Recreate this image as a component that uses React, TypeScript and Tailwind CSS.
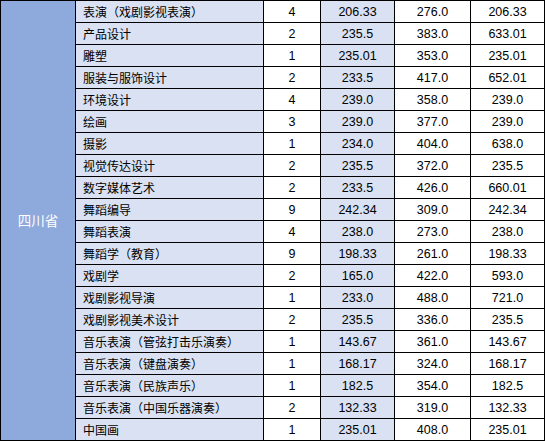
const rows: [string, string, string, string, string][] = [
  ["表演（戏剧影视表演）", "4", "206.33", "276.0", "206.33"],
  ["产品设计", "2", "235.5", "383.0", "633.01"],
  ["雕塑", "1", "235.01", "353.0", "235.01"],
  ["服装与服饰设计", "2", "233.5", "417.0", "652.01"],
  ["环境设计", "4", "239.0", "358.0", "239.0"],
  ["绘画", "3", "239.0", "377.0", "239.0"],
  ["摄影", "1", "234.0", "404.0", "638.0"],
  ["视觉传达设计", "2", "235.5", "372.0", "235.5"],
  ["数字媒体艺术", "2", "233.5", "426.0", "660.01"],
  ["舞蹈编导", "9", "242.34", "309.0", "242.34"],
  ["舞蹈表演", "4", "238.0", "273.0", "238.0"],
  ["舞蹈学（教育）", "9", "198.33", "261.0", "198.33"],
  ["戏剧学", "2", "165.0", "422.0", "593.0"],
  ["戏剧影视导演", "1", "233.0", "488.0", "721.0"],
  ["戏剧影视美术设计", "2", "235.5", "336.0", "235.5"],
  ["音乐表演（管弦打击乐演奏）", "1", "143.67", "361.0", "143.67"],
  ["音乐表演（键盘演奏）", "1", "168.17", "324.0", "168.17"],
  ["音乐表演（民族声乐）", "1", "182.5", "354.0", "182.5"],
  ["音乐表演（中国乐器演奏）", "2", "132.33", "319.0", "132.33"],
  ["中国画", "1", "235.01", "408.0", "235.01"],
];

const cjk = "font-['Noto_Sans_CJK_SC',sans-serif]";
const num = "font-['Liberation_Sans',sans-serif]";

export default function App() {
  return (
    <div className="w-[545px] h-[442px] bg-white">
      <div className="grid grid-cols-[74px_187px_56px_73px_75px_73px] grid-rows-[repeat(20,21px)] gap-px p-px bg-black w-[545px] text-black">
        <div
          className={`row-span-20 bg-[#8ea9db] flex items-center justify-center text-white text-[13.5px] ${cjk}`}
        >
          四川省
        </div>
        {rows.map(([name, count, a, b, c]) => (
          <Row key={name} name={name} count={count} a={a} b={b} c={c} />
        ))}
      </div>
    </div>
  );
}

function Row({
  name,
  count,
  a,
  b,
  c,
}: {
  name: string;
  count: string;
  a: string;
  b: string;
  c: string;
}) {
  return (
    <>
      <div
        className={`bg-[#d9e1f2] flex items-end pl-[7px] pb-[1px] text-[12px] leading-[18px] whitespace-nowrap ${cjk}`}
      >
        {name}
      </div>
      <div className={`bg-white flex items-end justify-center pb-[1px] text-[12.5px] leading-[18px] ${num}`}>
        {count}
      </div>
      <div className={`bg-[#d9e1f2] flex items-end justify-center pb-[1px] text-[12.5px] leading-[18px] ${num}`}>
        {a}
      </div>
      <div className={`bg-white flex items-end justify-center pb-[1px] text-[12.5px] leading-[18px] ${num}`}>
        {b}
      </div>
      <div className={`bg-white flex items-end justify-center pb-[1px] text-[12.5px] leading-[18px] ${num}`}>
        {c}
      </div>
    </>
  );
}
